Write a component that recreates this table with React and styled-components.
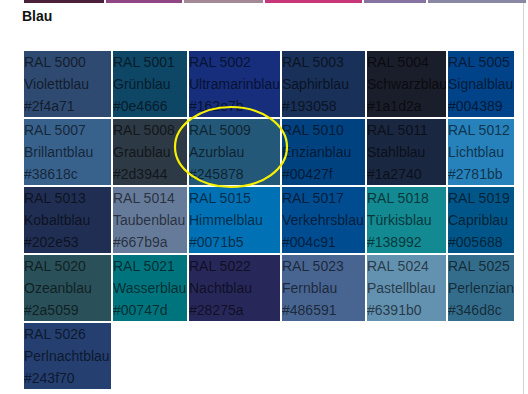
import React from 'react';
import styled, { createGlobalStyle } from 'styled-components';

const GlobalStyle = createGlobalStyle`
  body {
    margin: 0;
    background: #ffffff;
    font-family: "Liberation Sans", Arial, sans-serif;
  }
`;

const Page = styled.div`
  position: relative;
  box-sizing: border-box;
  width: 524px;
  min-height: 394px;
  padding-left: 22px;
  border-right: 1px solid #d4d4d4;
`;

// bottom edge of the previous (violet) table, scrolled out of view
const PrevRow = styled.div`
  display: flex;
  gap: 2px;
  padding-left: 2px;
  height: 3px;
`;

const PrevCell = styled.div`
  flex: none;
  width: ${(p) => p.$w}px;
  height: 3px;
  background: ${(p) => p.$bg};
`;

const Heading = styled.h3`
  margin: 5px 0 0;
  font-size: 14px;
  line-height: 16px;
  font-weight: bold;
  color: #111111;
`;

const ColorGrid = styled.div`
  display: grid;
  grid-template-columns: 87px 74px 91px 83px 79px 66px;
  gap: 2px;
  padding: 2px;
  margin-top: 25px;
  width: max-content;
`;

const Swatch = styled.div`
  background: ${(p) => p.$bg};
  font-size: 14px;
  line-height: 22px;
  color: rgba(0, 0, 0, 0.62);
  white-space: nowrap;
  overflow: hidden;
`;

const Line = styled.div``;

const Marker = styled.svg`
  position: absolute;
  left: 174px;
  top: 106px;
  overflow: visible;
`;

const prev = [
  { w: 80, bg: '#4a203b' },
  { w: 76, bg: '#904684' },
  { w: 79, bg: '#a38995' },
  { w: 97, bg: '#c63678' },
  { w: 62, bg: '#8773a1' },
  { w: 98, bg: '#8a87a5' },
];

const colors = [
  ['5000', 'Violettblau', '#2f4a71'],
  ['5001', 'Grünblau', '#0e4666'],
  ['5002', 'Ultramarinblau', '#162e7b'],
  ['5003', 'Saphirblau', '#193058'],
  ['5004', 'Schwarzblau', '#1a1d2a'],
  ['5005', 'Signalblau', '#004389'],
  ['5007', 'Brillantblau', '#38618c'],
  ['5008', 'Graublau', '#2d3944'],
  ['5009', 'Azurblau', '#245878'],
  ['5010', 'Enzianblau', '#00427f'],
  ['5011', 'Stahlblau', '#1a2740'],
  ['5012', 'Lichtblau', '#2781bb'],
  ['5013', 'Kobaltblau', '#202e53'],
  ['5014', 'Taubenblau', '#667b9a'],
  ['5015', 'Himmelblau', '#0071b5'],
  ['5017', 'Verkehrsblau', '#004c91'],
  ['5018', 'Türkisblau', '#138992'],
  ['5019', 'Capriblau', '#005688'],
  ['5020', 'Ozeanblau', '#2a5059'],
  ['5021', 'Wasserblau', '#00747d'],
  ['5022', 'Nachtblau', '#28275a'],
  ['5023', 'Fernblau', '#486591'],
  ['5024', 'Pastellblau', '#6391b0'],
  ['5025', 'Perlenzian', '#346d8c'],
  ['5026', 'Perlnachtblau', '#243f70'],
];

const App = () => (
  <>
    <GlobalStyle />
    <Page>
      <PrevRow>
        {prev.map((p, i) => (
          <PrevCell key={i} $w={p.w} $bg={p.bg} />
        ))}
      </PrevRow>
      <Heading>Blau</Heading>
      <ColorGrid>
        {colors.map(([code, name, hex]) => (
          <Swatch key={code} $bg={hex}>
            <Line>RAL {code}</Line>
            <Line>{name}</Line>
            <Line>{hex}</Line>
          </Swatch>
        ))}
      </ColorGrid>
      <Marker width="114" height="82" viewBox="0 0 114 82">
        <ellipse cx="57" cy="41" rx="56" ry="40" fill="none" stroke="#f7f000" strokeWidth="2.2" />
      </Marker>
    </Page>
  </>
);

export default App;
